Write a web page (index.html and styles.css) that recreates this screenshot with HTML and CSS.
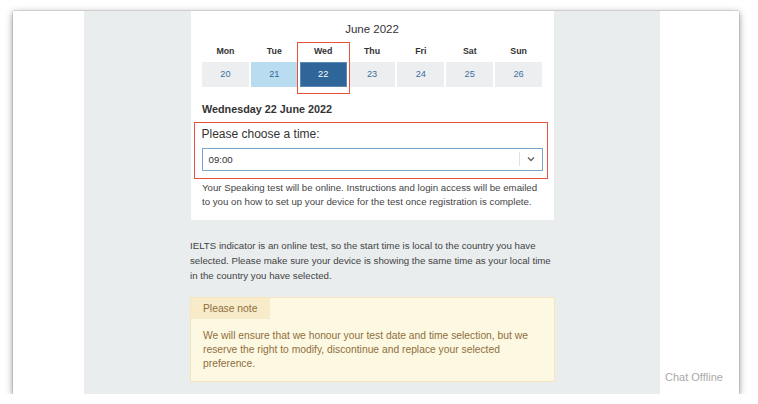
FILE: index.html
```html
<!DOCTYPE html>
<html lang="en">
<head>
<meta charset="utf-8">
<title>Choose a time</title>
<link rel="stylesheet" href="styles.css">
</head>
<body>
<div class="window">
  <div class="page">
    <div class="column">
      <div class="card">
        <div class="month">June 2022</div>
        <div class="week">
          <div class="day"><div class="dname">Mon</div><div class="cell">20</div></div>
          <div class="day"><div class="dname">Tue</div><div class="cell avail">21</div></div>
          <div class="day marked"><div class="dname">Wed</div><div class="cell sel">22</div></div>
          <div class="day"><div class="dname">Thu</div><div class="cell">23</div></div>
          <div class="day"><div class="dname">Fri</div><div class="cell">24</div></div>
          <div class="day"><div class="dname">Sat</div><div class="cell">25</div></div>
          <div class="day"><div class="dname">Sun</div><div class="cell">26</div></div>
        </div>
        <div class="datetitle">Wednesday 22 June 2022</div>
        <div class="timebox">
          <div class="timelabel">Please choose a time:</div>
          <div class="select">
            <span class="value">09:00</span>
            <span class="sep"></span>
            <svg class="chev" width="10" height="10" viewBox="0 0 10 10"><path d="M2 3.5 L5 6.5 L8 3.5" fill="none" stroke="#666" stroke-width="1.4"/></svg>
          </div>
        </div>
        <p class="help">Your Speaking test will be online. Instructions and login access will be emailed to you on how to set up your device for the test once registration is complete.</p>
      </div>
      <p class="info">IELTS indicator is an online test, so the start time is local to the country you have selected. Please make sure your device is showing the same time as your local time in the country you have selected.</p>
      <div class="note">
        <div class="notetab">Please note</div>
        <p class="notebody">We will ensure that we honour your test date and time selection, but we reserve the right to modify, discontinue and replace your selected preference.</p>
      </div>
    </div>
  </div>
  <div class="chat">Chat Offline</div>
</div>
</body>
</html>
```

FILE: styles.css
```css
html, body {
  margin: 0;
  padding: 0;
  background: #ffffff;
}
body {
  font-family: "Liberation Sans", Arial, sans-serif;
  color: #333;
}
.window {
  position: relative;
  width: 726px;
  height: 383px;
  margin: 11px 0 0 13px;
  background: #ffffff;
  overflow: hidden;
  box-shadow: 0 2px 7px rgba(0, 0, 0, 0.45), 0 0 1px rgba(0, 0, 0, 0.5);
  display: flex;
}
.page {
  margin-left: 71px;
  width: 576px;
  height: 100%;
  background: #e9edee;
  padding-left: 106px;
  box-sizing: border-box;
}
.column {
  width: 365px;
}
.card {
  margin: 0 1px;
  background: #ffffff;
  padding: 10px 12px 11px 11px;
}
.month {
  text-align: center;
  font-size: 11.5px;
  line-height: 16px;
  color: #333;
}
.week {
  display: flex;
  gap: 2px;
  margin-top: 8px;
}
.day {
  flex: 1;
  display: flex;
  flex-direction: column;
  gap: 5px;
}
.marked {
  position: relative;
}
.marked::after {
  content: "";
  position: absolute;
  left: -3px;
  right: -3px;
  top: -3px;
  bottom: -7px;
  border: 1.5px solid #e9523e;
}
.dname {
  text-align: center;
  font-size: 8.8px;
  font-weight: bold;
  line-height: 12px;
  color: #333;
}
.cell {
  height: 25px;
  line-height: 25px;
  text-align: center;
  font-size: 9.2px;
  background: #eceef0;
  color: #3a6f9e;
}
.cell.avail {
  background: #b9dcf0;
  color: #2f6796;
}
.cell.sel {
  background: #2f6699;
  color: #ffffff;
  box-shadow: inset 0 0 0 1px #5a89b5;
}
.datetitle {
  margin-top: 15px;
  font-size: 10.8px;
  font-weight: bold;
  line-height: 14px;
  color: #333;
}
.timebox {
  margin: 6px -6px 0 -8px;
  border: 1.5px solid #e9523e;
  padding: 4.3px 4.5px 7px 6.5px;
}
.timelabel {
  font-size: 12px;
  line-height: 14px;
  color: #333;
}
.select {
  margin-top: 6.7px;
  height: 23px;
  box-sizing: border-box;
  border: 1.5px solid #7ba4c8;
  display: flex;
  align-items: center;
  padding: 0 6px 0 6px;
  background: #fff;
}
.value {
  flex: 1;
  font-size: 9.7px;
  color: #333;
}
.sep {
  width: 1px;
  height: 14px;
  background: #e2e2e2;
  margin-right: 6px;
}
.chev {
  display: block;
}
.help {
  margin: 2px 0 0 0;
  font-size: 9.7px;
  line-height: 14px;
  color: #444;
}
.info {
  margin: 18px 0 0 0;
  font-size: 9.7px;
  line-height: 15px;
  color: #444;
}
.note {
  margin-top: 14px;
  background: #fdf8e2;
  border: 1px solid #f5e5bd;
  color: #8f6f3c;
}
.notetab {
  display: inline-block;
  background: #f8ebca;
  font-size: 10.3px;
  line-height: 21px;
  padding: 0 13px 0 12px;
}
.notebody {
  margin: 10px 0 0 0;
  padding: 0 13px 10px 12px;
  font-size: 10.3px;
  line-height: 14px;
}
.chat {
  position: absolute;
  left: 652px;
  top: 360px;
  font-size: 11px;
  color: #a9a9a9;
}
```
